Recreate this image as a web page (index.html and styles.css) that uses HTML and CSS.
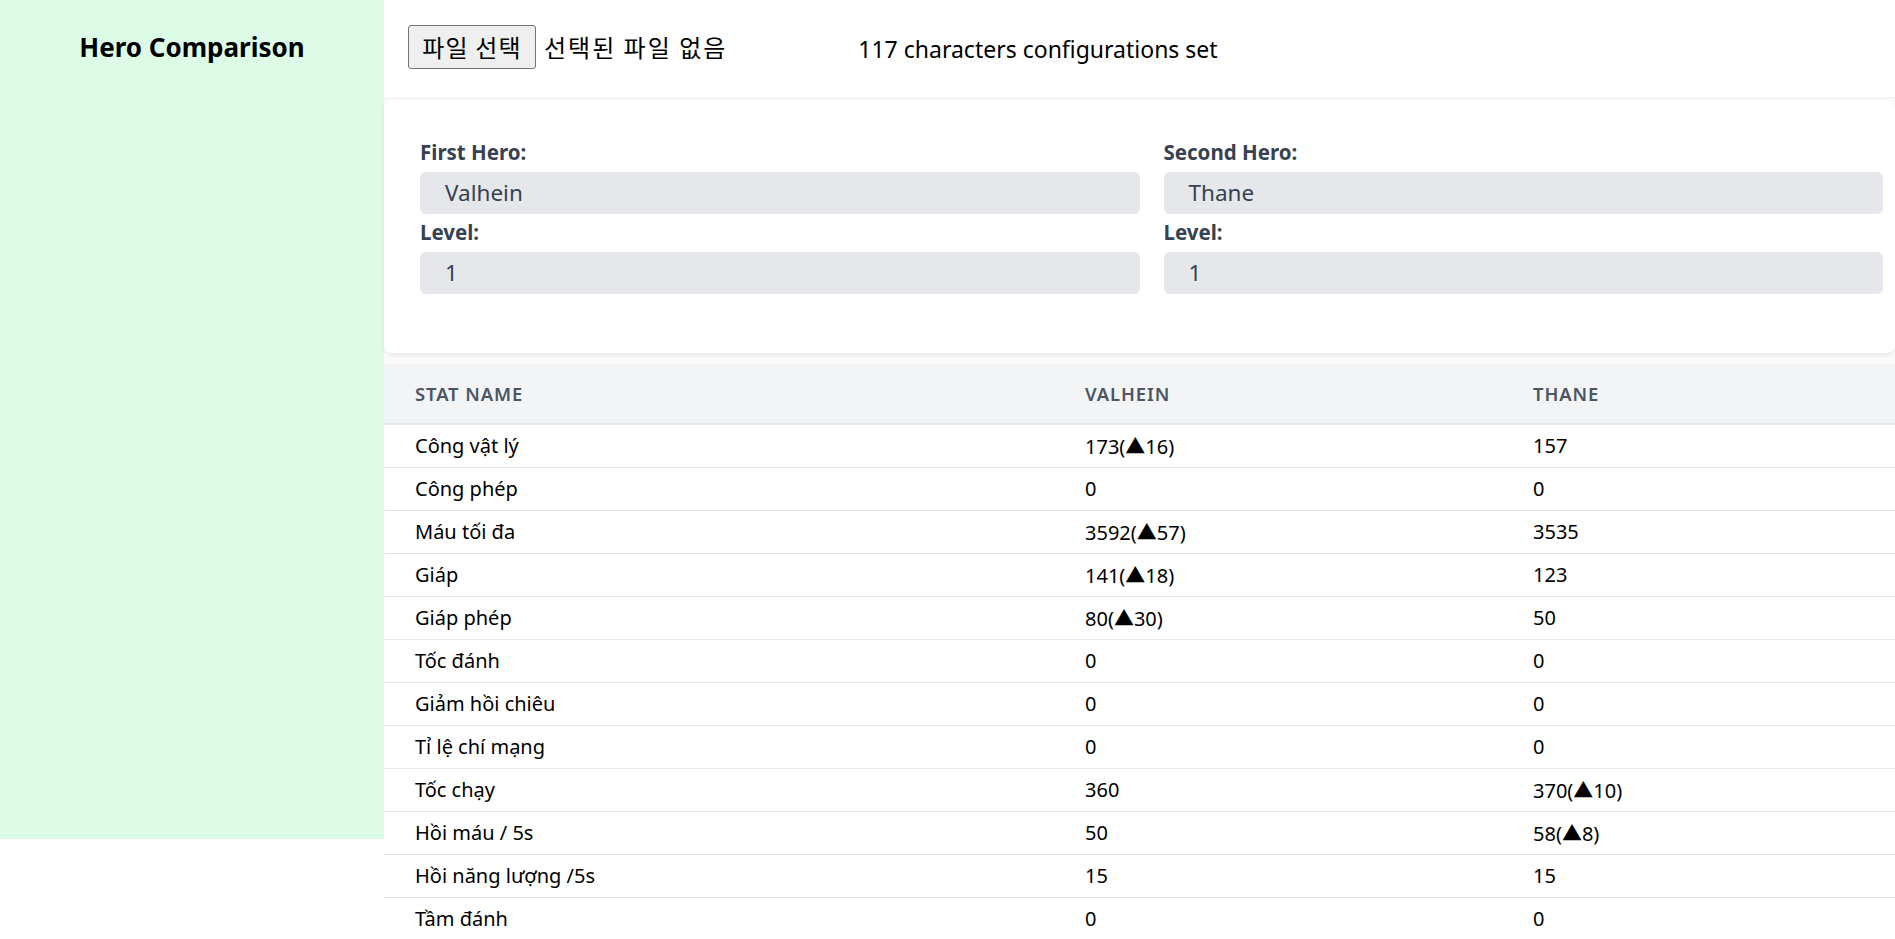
FILE: index.html
```html
<!DOCTYPE html>
<html lang="vi">
<head>
<meta charset="utf-8">
<title>Hero Comparison</title>
<link rel="stylesheet" href="styles.css">
</head>
<body>
<div class="layout">
  <aside class="sidebar">
    <h1 class="brand">Hero Comparison</h1>
  </aside>
  <main class="main">
    <header class="topbar">
      <div class="file-picker">
        <button class="file-btn" type="button">파일 선택</button>
        <span class="file-name">선택된 파일 없음</span>
      </div>
      <span class="status">117 characters configurations set</span>
    </header>
    <section class="card">
      <div class="hero-col">
        <label class="field-label">First Hero:</label>
        <div class="field">Valhein</div>
        <label class="field-label">Level:</label>
        <div class="field">1</div>
      </div>
      <div class="hero-col">
        <label class="field-label">Second Hero:</label>
        <div class="field">Thane</div>
        <label class="field-label">Level:</label>
        <div class="field">1</div>
      </div>
    </section>
    <table class="stats">
      <thead>
        <tr><th class="c1">Stat Name</th><th class="c2">Valhein</th><th class="c3">Thane</th></tr>
      </thead>
      <tbody>
        <tr><td>Công vật lý</td><td>173(▲16)</td><td>157</td></tr>
        <tr><td>Công phép</td><td>0</td><td>0</td></tr>
        <tr><td>Máu tối đa</td><td>3592(▲57)</td><td>3535</td></tr>
        <tr><td>Giáp</td><td>141(▲18)</td><td>123</td></tr>
        <tr><td>Giáp phép</td><td>80(▲30)</td><td>50</td></tr>
        <tr><td>Tốc đánh</td><td>0</td><td>0</td></tr>
        <tr><td>Giảm hồi chiêu</td><td>0</td><td>0</td></tr>
        <tr><td>Tỉ lệ chí mạng</td><td>0</td><td>0</td></tr>
        <tr><td>Tốc chạy</td><td>360</td><td>370(▲10)</td></tr>
        <tr><td>Hồi máu / 5s</td><td>50</td><td>58(▲8)</td></tr>
        <tr><td>Hồi năng lượng /5s</td><td>15</td><td>15</td></tr>
        <tr><td>Tầm đánh</td><td>0</td><td>0</td></tr>
      </tbody>
    </table>
  </main>
</div>
</body>
</html>
```
FILE: styles.css
```css
* { box-sizing: border-box; }
html, body { margin: 0; padding: 0; background: #ffffff; }
body {
  font-family: "Noto Sans", "Noto Sans CJK KR", sans-serif;
  color: #000;
}
.layout { display: flex; align-items: flex-start; }
.sidebar {
  width: 384px;
  flex: 0 0 384px;
  height: 839px;
  background: #dcfce7;
  padding-top: 29px;
}
.brand {
  margin: 0;
  text-align: center;
  font-size: 26px;
  font-weight: 700;
  line-height: 36px;
}
.main {
  flex: 1;
  min-width: 0;
  background: #fafafa;
}
.topbar {
  height: 97px;
  background: #fff;
  display: flex;
  align-items: center;
  padding: 0 24px;
  box-shadow: 0 1px 2px rgba(0,0,0,0.04);
}
.file-picker { display: flex; align-items: center; margin-top: -3px; }
.file-btn {
  font-family: "Noto Sans CJK KR", sans-serif;
  font-size: 24px;
  letter-spacing: 1.2px;
  line-height: 30px;
  height: 44px;
  width: 128px;
  padding: 0;
  margin: 0 8px 0 0;
  background: #efefef;
  color: #000;
  border: 1px solid #767676;
  border-radius: 3px;
}
.file-name {
  font-family: "Noto Sans CJK KR", sans-serif;
  font-size: 24px;
  letter-spacing: 2px;
  line-height: 30px;
}
.status {
  margin-left: 131px;
  font-size: 23px;
  line-height: 30px;
}
.card {
  margin-top: 3px;
  background: #fff;
  border-radius: 8px;
  box-shadow: 0 2px 4px rgba(0,0,0,0.08);
  display: grid;
  grid-template-columns: 1fr 1fr;
  column-gap: 24px;
  padding: 38px 12px 59px 36px;
}
.hero-col { display: flex; flex-direction: column; gap: 6px; }
.field-label {
  font-size: 20.5px;
  font-weight: 700;
  line-height: 28px;
  color: #374151;
}
.field {
  height: 42px;
  background: #e5e7eb;
  border-radius: 6px;
  padding-left: 25px;
  font-size: 22.5px;
  line-height: 42px;
  color: #374151;
}
.field + .field-label { margin-top: -2px; }
.stats {
  margin-top: 11px;
  width: 100%;
  border-collapse: collapse;
  table-layout: fixed;
  background: #fff;
}
.stats th {
  background: #f3f4f6;
  color: #4b5563;
  text-transform: uppercase;
  font-size: 18.4px;
  font-weight: 600;
  letter-spacing: 0.05em;
  text-align: left;
  height: 60px;
  padding: 0 0 0 31px;
  border-bottom: 2px solid #e5e7eb;
}
.stats .c1 { width: 670px; }
.stats .c2 { width: 448px; }
.stats td {
  height: 43px;
  padding: 0 0 0 31px;
  font-size: 20px;
  border-bottom: 1px solid #e5e7eb;
  color: #000;
}
```
